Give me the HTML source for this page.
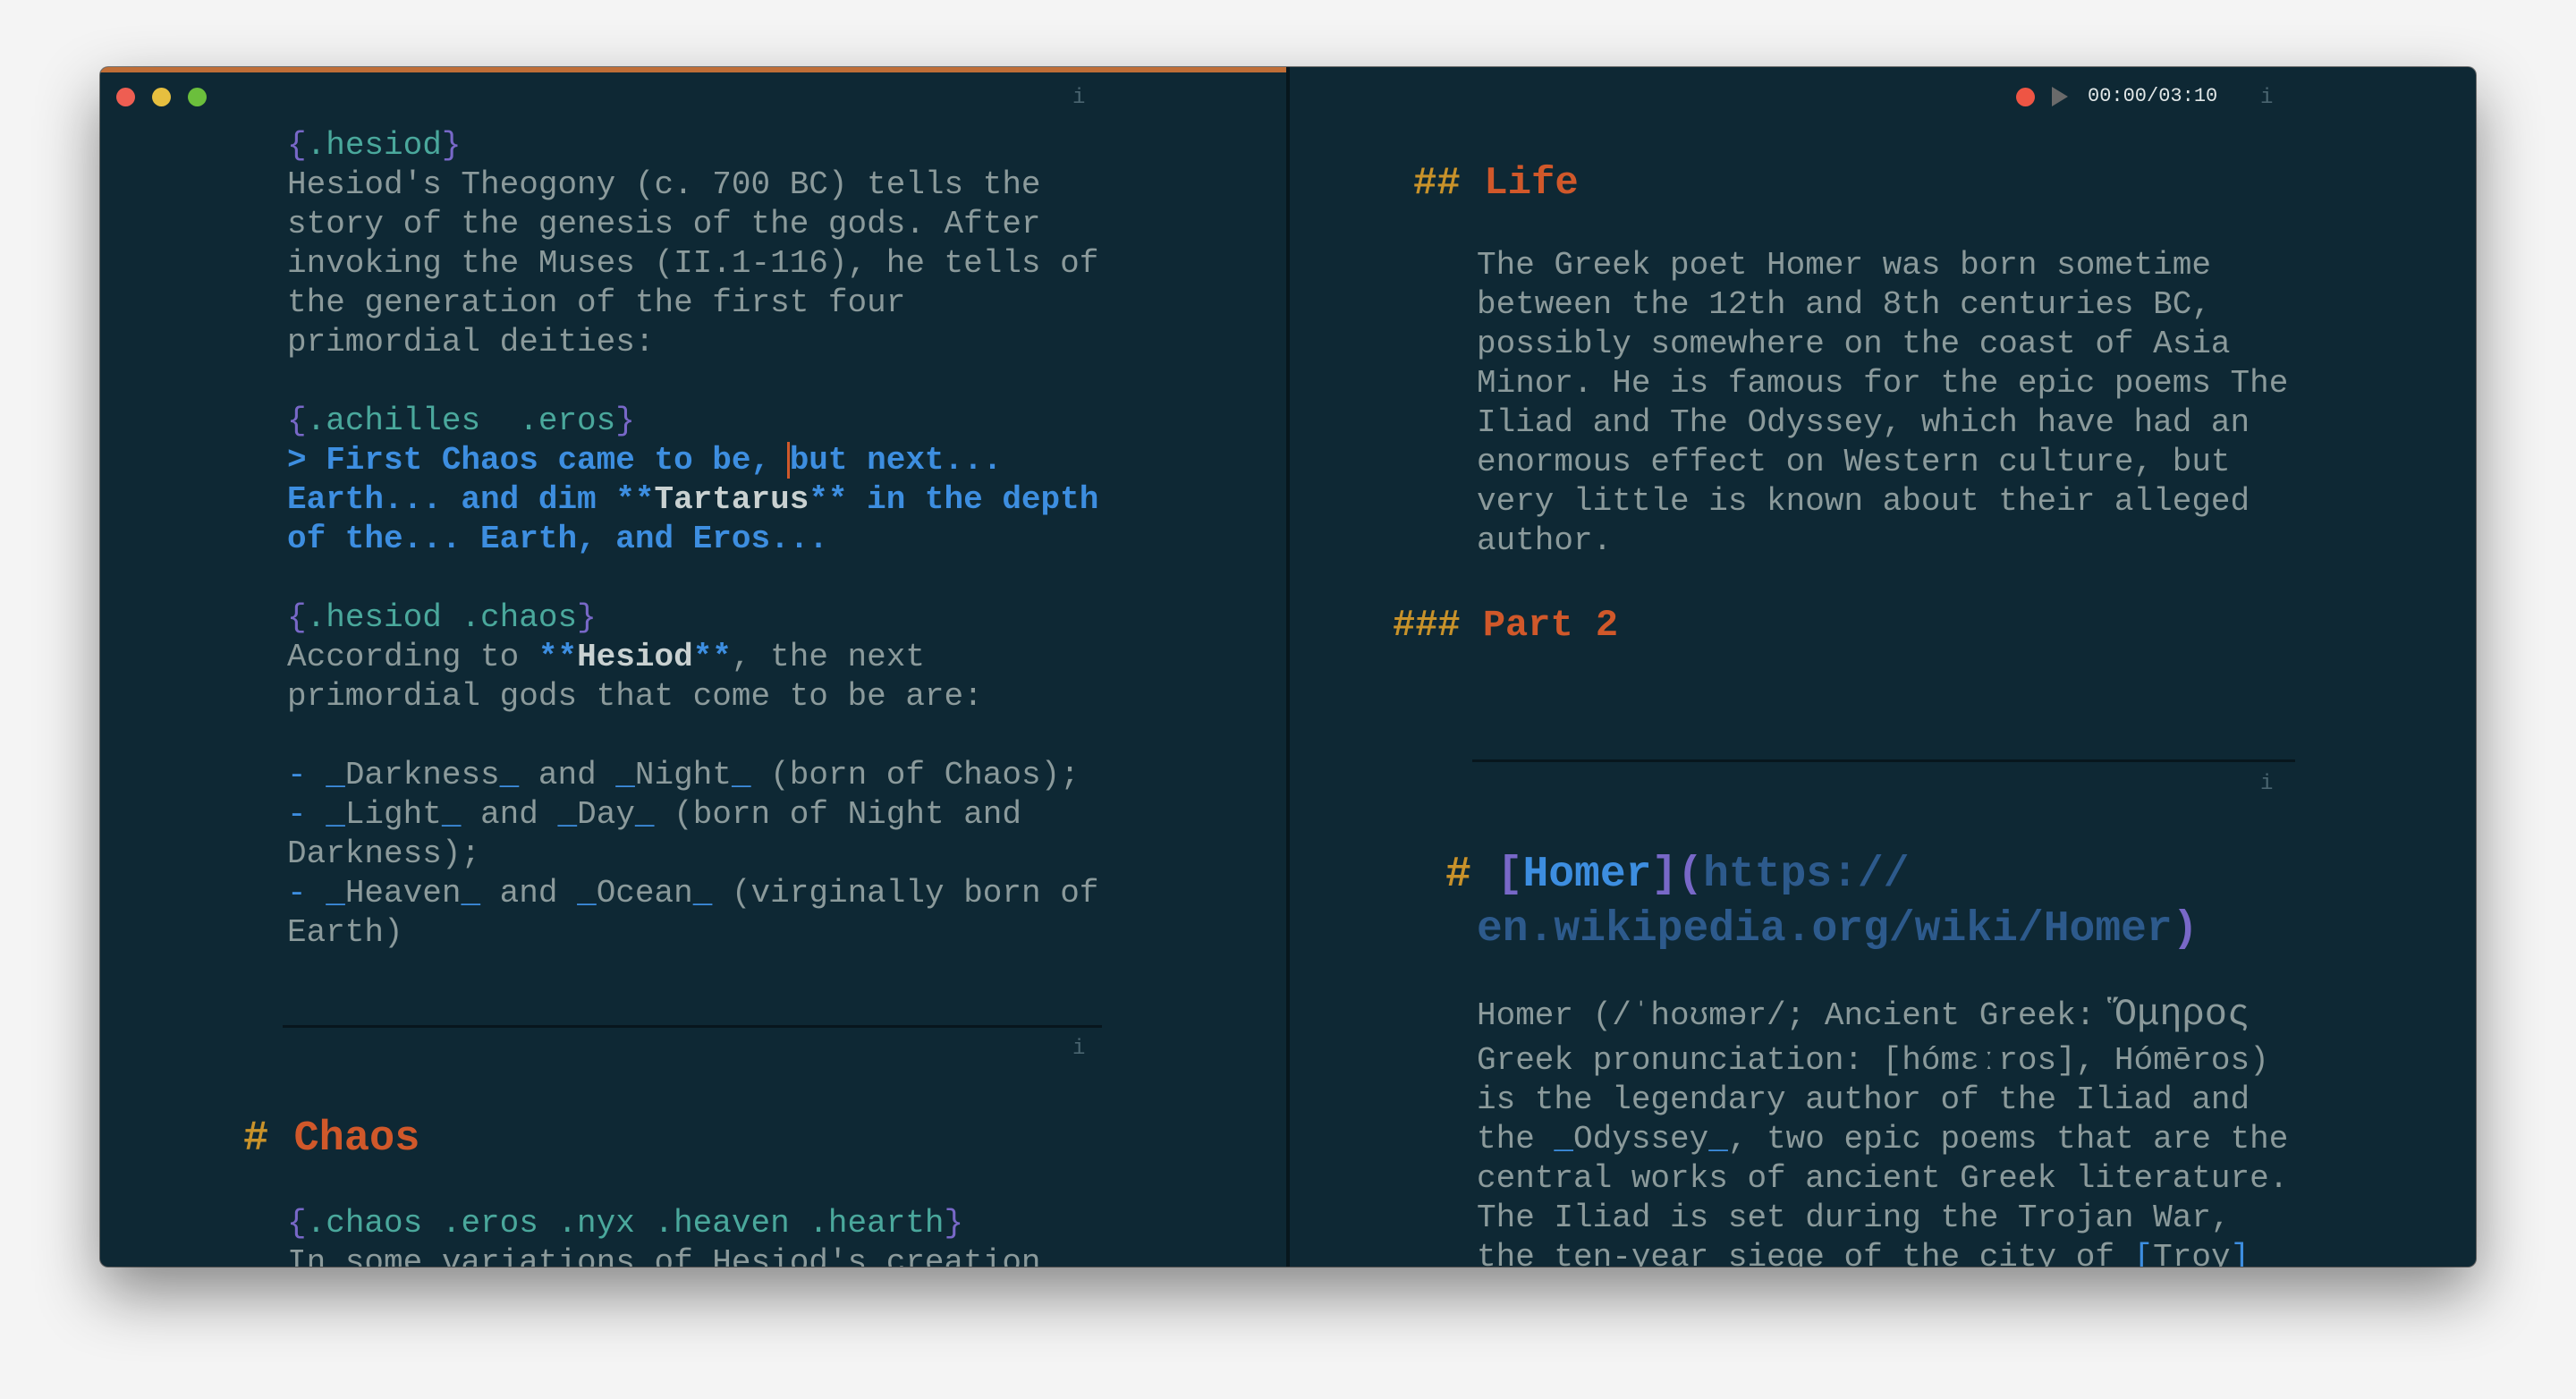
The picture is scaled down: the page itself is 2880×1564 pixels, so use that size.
<!DOCTYPE html>
<html><head><meta charset="utf-8"><style>
*{margin:0;padding:0;box-sizing:border-box}
html,body{width:2880px;height:1564px;overflow:hidden;background:#f4f4f4}
body{font-family:"Liberation Mono","DejaVu Sans Mono",monospace}
.win{position:absolute;left:112px;top:75px;width:2656px;height:1341px;background:#0e2834;border-radius:9px;overflow:hidden;box-shadow:0 30px 70px rgba(0,0,0,.45),0 0 0 1px rgba(0,0,0,.5)}
.bar{position:absolute;left:0;top:0;width:1326px;height:6px;background:#bf6e37}
.div{position:absolute;left:1326px;top:0;width:4px;height:100%;background:#07161d}
.dot{position:absolute;top:23px;width:21px;height:21px;border-radius:50%}
.c{position:absolute;left:0;top:3px;width:100%;height:100%}
.l{position:absolute;height:44px;line-height:44px;font-size:36px;color:#8b9a9b;white-space:pre}
.i{position:absolute;font-size:24px;color:#4a6570;line-height:30px}
.t{color:#4aa89c}.p{color:#7868c8}.b{color:#3d8ee0}.w{color:#c9d1d1;font-weight:bold}
.q{color:#3d8ee0;font-weight:bold}
.hh{color:#c8922a;font-weight:bold}.ho{color:#d0582a;font-weight:bold}
.u{color:#2d5a8c;font-weight:bold}
.hr{position:absolute;height:3px;background:#07161d}
</style></head><body>
<div class="win">
<div class="bar"></div>
<div class="div"></div>
<div class="dot" style="left:18px;background:#ee5e52"></div>
<div class="dot" style="left:58px;background:#e6bf3f"></div>
<div class="dot" style="left:98px;background:#6bbf3c"></div>
<div class="i" style="left:1087px;top:20px">i</div>
<div class="c">
<div class="l" style="left:209px;top:63px"><span class="p">{</span><span class="t">.hesiod</span><span class="p">}</span></div>
<div class="l" style="left:209px;top:107px">Hesiod's Theogony (c. 700 BC) tells the</div>
<div class="l" style="left:209px;top:151px">story of the genesis of the gods. After</div>
<div class="l" style="left:209px;top:195px">invoking the Muses (II.1-116), he tells of</div>
<div class="l" style="left:209px;top:239px">the generation of the first four</div>
<div class="l" style="left:209px;top:283px">primordial deities:</div>
<div class="l" style="left:209px;top:371px"><span class="p">{</span><span class="t">.achilles  .eros</span><span class="p">}</span></div>
<div class="l" style="left:209px;top:415px"><span class="q">&gt; First Chaos came to be, <span style="border-left:3px solid #d0582a;margin-left:-3px">but next...</span></span></div>
<div class="l" style="left:209px;top:459px"><span class="q">Earth... and dim **</span><span class="w">Tartarus</span><span class="q">** in the depth</span></div>
<div class="l" style="left:209px;top:503px"><span class="q">of the... Earth, and Eros...</span></div>
<div class="l" style="left:209px;top:591px"><span class="p">{</span><span class="t">.hesiod .chaos</span><span class="p">}</span></div>
<div class="l" style="left:209px;top:635px">According to <span class="q">**</span><span class="w">Hesiod</span><span class="q">**</span>, the next</div>
<div class="l" style="left:209px;top:679px">primordial gods that come to be are:</div>
<div class="l" style="left:209px;top:767px"><span class="b">-</span> <span class="b">_</span>Darkness<span class="b">_</span> and <span class="b">_</span>Night<span class="b">_</span> (born of Chaos);</div>
<div class="l" style="left:209px;top:811px"><span class="b">-</span> <span class="b">_</span>Light<span class="b">_</span> and <span class="b">_</span>Day<span class="b">_</span> (born of Night and</div>
<div class="l" style="left:209px;top:855px">Darkness);</div>
<div class="l" style="left:209px;top:899px"><span class="b">-</span> <span class="b">_</span>Heaven<span class="b">_</span> and <span class="b">_</span>Ocean<span class="b">_</span> (virginally born of</div>
<div class="l" style="left:209px;top:943px">Earth)</div>
<div class="hr" style="left:204px;top:1068px;width:916px"></div>
<div class="i" style="left:1087px;top:1080px">i</div>
<div class="l" style="left:160px;top:1166px;font-size:47px;height:60px;line-height:60px"><span class="hh">#</span> <span class="ho">Chaos</span></div>
<div class="l" style="left:209px;top:1268px"><span class="p">{</span><span class="t">.chaos .eros .nyx .heaven .hearth</span><span class="p">}</span></div>
<div class="l" style="left:209px;top:1312px">In some variations of Hesiod's creation</div>

<div class="l" style="left:1468px;top:97px;font-size:44px;height:60px;line-height:60px"><span class="hh">##</span> <span class="ho">Life</span></div>
<div class="l" style="left:1539px;top:197px">The Greek poet Homer was born sometime</div>
<div class="l" style="left:1539px;top:241px">between the 12th and 8th centuries BC,</div>
<div class="l" style="left:1539px;top:285px">possibly somewhere on the coast of Asia</div>
<div class="l" style="left:1539px;top:329px">Minor. He is famous for the epic poems The</div>
<div class="l" style="left:1539px;top:373px">Iliad and The Odyssey, which have had an</div>
<div class="l" style="left:1539px;top:417px">enormous effect on Western culture, but</div>
<div class="l" style="left:1539px;top:461px">very little is known about their alleged</div>
<div class="l" style="left:1539px;top:505px">author.</div>
<div class="l" style="left:1445px;top:591px;font-size:42px;height:60px;line-height:60px"><span class="hh">###</span> <span class="ho">Part 2</span></div>
<div class="hr" style="left:1534px;top:771px;width:920px"></div>
<div class="i" style="left:2415px;top:784px">i</div>
<div class="l" style="left:1504px;top:870px;font-size:48px;height:60px;line-height:60px"><span class="hh">#</span> <span class="p" style="font-weight:bold">[</span><span class="b" style="font-weight:bold">Homer</span><span class="p" style="font-weight:bold">](</span><span class="u">https://</span></div>
<div class="l" style="left:1539px;top:931px;font-size:48px;height:60px;line-height:60px"><span class="u">en.wikipedia.org/wiki/Homer</span><span class="p" style="font-weight:bold">)</span></div>
<div class="l" style="left:1539px;top:1034px">Homer (/ˈhoʊmər/; Ancient Greek: <span style="font-size:42px">Ὅμηρος</span></div>
<div class="l" style="left:1539px;top:1086px">Greek pronunciation: [hómɛːros], Hómēros)</div>
<div class="l" style="left:1539px;top:1130px">is the legendary author of the Iliad and</div>
<div class="l" style="left:1539px;top:1174px">the <span class="b">_</span>Odyssey<span class="b">_</span>, two epic poems that are the</div>
<div class="l" style="left:1539px;top:1218px">central works of ancient Greek literature.</div>
<div class="l" style="left:1539px;top:1262px">The Iliad is set during the Trojan War,</div>
<div class="l" style="left:1539px;top:1306px">the ten-year siege of the city of <span class="b">[</span>Troy<span class="b">]</span></div>
</div>
<div class="dot" style="left:2142px;background:#ee5544"></div>
<div style="position:absolute;left:2182px;top:22px;width:0;height:0;border-top:11px solid transparent;border-bottom:11px solid transparent;border-left:18px solid #6a6a6a"></div>
<div style="position:absolute;left:2222px;top:18px;font-size:22px;line-height:30px;color:#e0e6e6">00:00/03:10</div>
<div class="i" style="left:2415px;top:20px">i</div>
</div>
</body></html>
